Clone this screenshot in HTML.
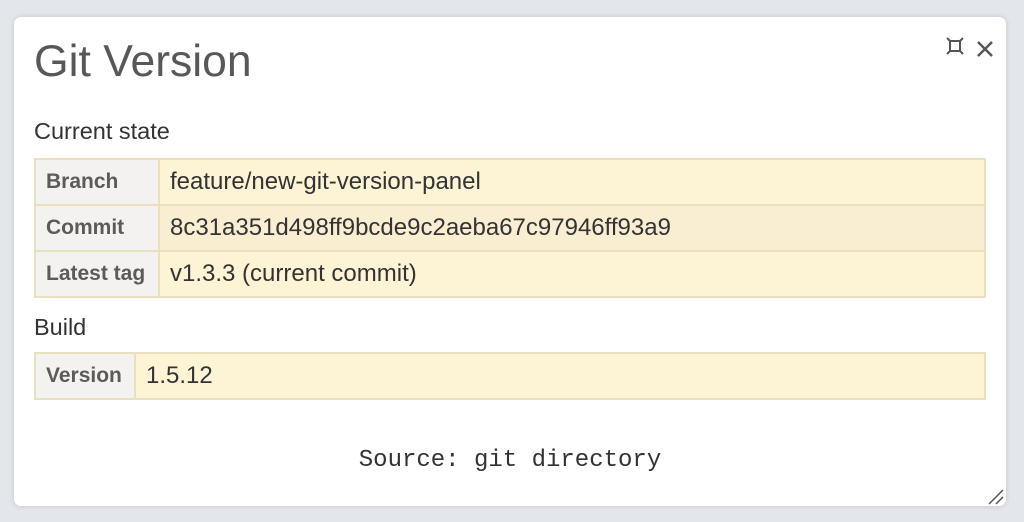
<!DOCTYPE html>
<html><head><style>
body{margin:0;width:1024px;height:522px;background:#e3e7ec;font-family:"Liberation Sans",sans-serif;position:relative;overflow:hidden}
.panel{position:absolute;left:14px;top:17px;width:992px;height:489px;background:#fff;border-radius:7px;box-shadow:0 0 6px rgba(0,0,0,.15)}
h1{position:absolute;left:20px;top:20px;margin:0;font-weight:normal;font-size:44.5px;color:#585856}
.lbl{position:absolute;left:20px;font-size:23.5px;color:#333}
table{position:absolute;left:20px;border-collapse:collapse;width:952px}
td{border:2px solid #e9e0c0;height:44px;padding:0 10px;font-size:24px;color:#333;background:#fdf3d5}
td.h{background:#f3f2f1;color:#5e5a58;font-weight:bold;font-size:21px;white-space:nowrap}
tr.alt td:not(.h){background:#f9eed1}
.src{position:absolute;left:0;right:0;top:430px;text-align:center;font-family:"Liberation Mono",monospace;font-size:24px;color:#333}
</style></head><body>
<div class="panel">
<h1>Git Version</h1>
<svg style="position:absolute;left:932px;top:20px" width="18" height="18" viewBox="0 0 18 18"><rect x="4" y="4" width="10" height="10" fill="none" stroke="#555" stroke-width="2"/><path d="M1 1L5 5M17 1L13 5M1 17L5 13M17 17L13 13" stroke="#555" stroke-width="2"/></svg>
<svg style="position:absolute;left:962px;top:23px" width="18" height="18" viewBox="0 0 18 18"><path d="M2 2L16 16M16 2L2 16" stroke="#555" stroke-width="2.4"/></svg>
<div class="lbl" style="top:101px">Current state</div>
<table style="top:141px">
<tr><td class="h" style="width:102px">Branch</td><td>feature/new-git-version-panel</td></tr>
<tr class="alt"><td class="h">Commit</td><td>8c31a351d498ff9bcde9c2aeba67c97946ff93a9</td></tr>
<tr><td class="h">Latest tag</td><td>v1.3.3 (current commit)</td></tr>
</table>
<div class="lbl" style="top:297px">Build</div>
<table style="top:335px">
<tr><td class="h" style="width:78px">Version</td><td style="height:43px">1.5.12</td></tr>
</table>
<div class="src">Source: git directory</div>
<svg style="position:absolute;left:974px;top:472px" width="16" height="16" viewBox="0 0 16 16"><path d="M1 15L15 1M8 15L15 8" stroke="#555" stroke-width="1.5"/></svg>
</div>
</body></html>
